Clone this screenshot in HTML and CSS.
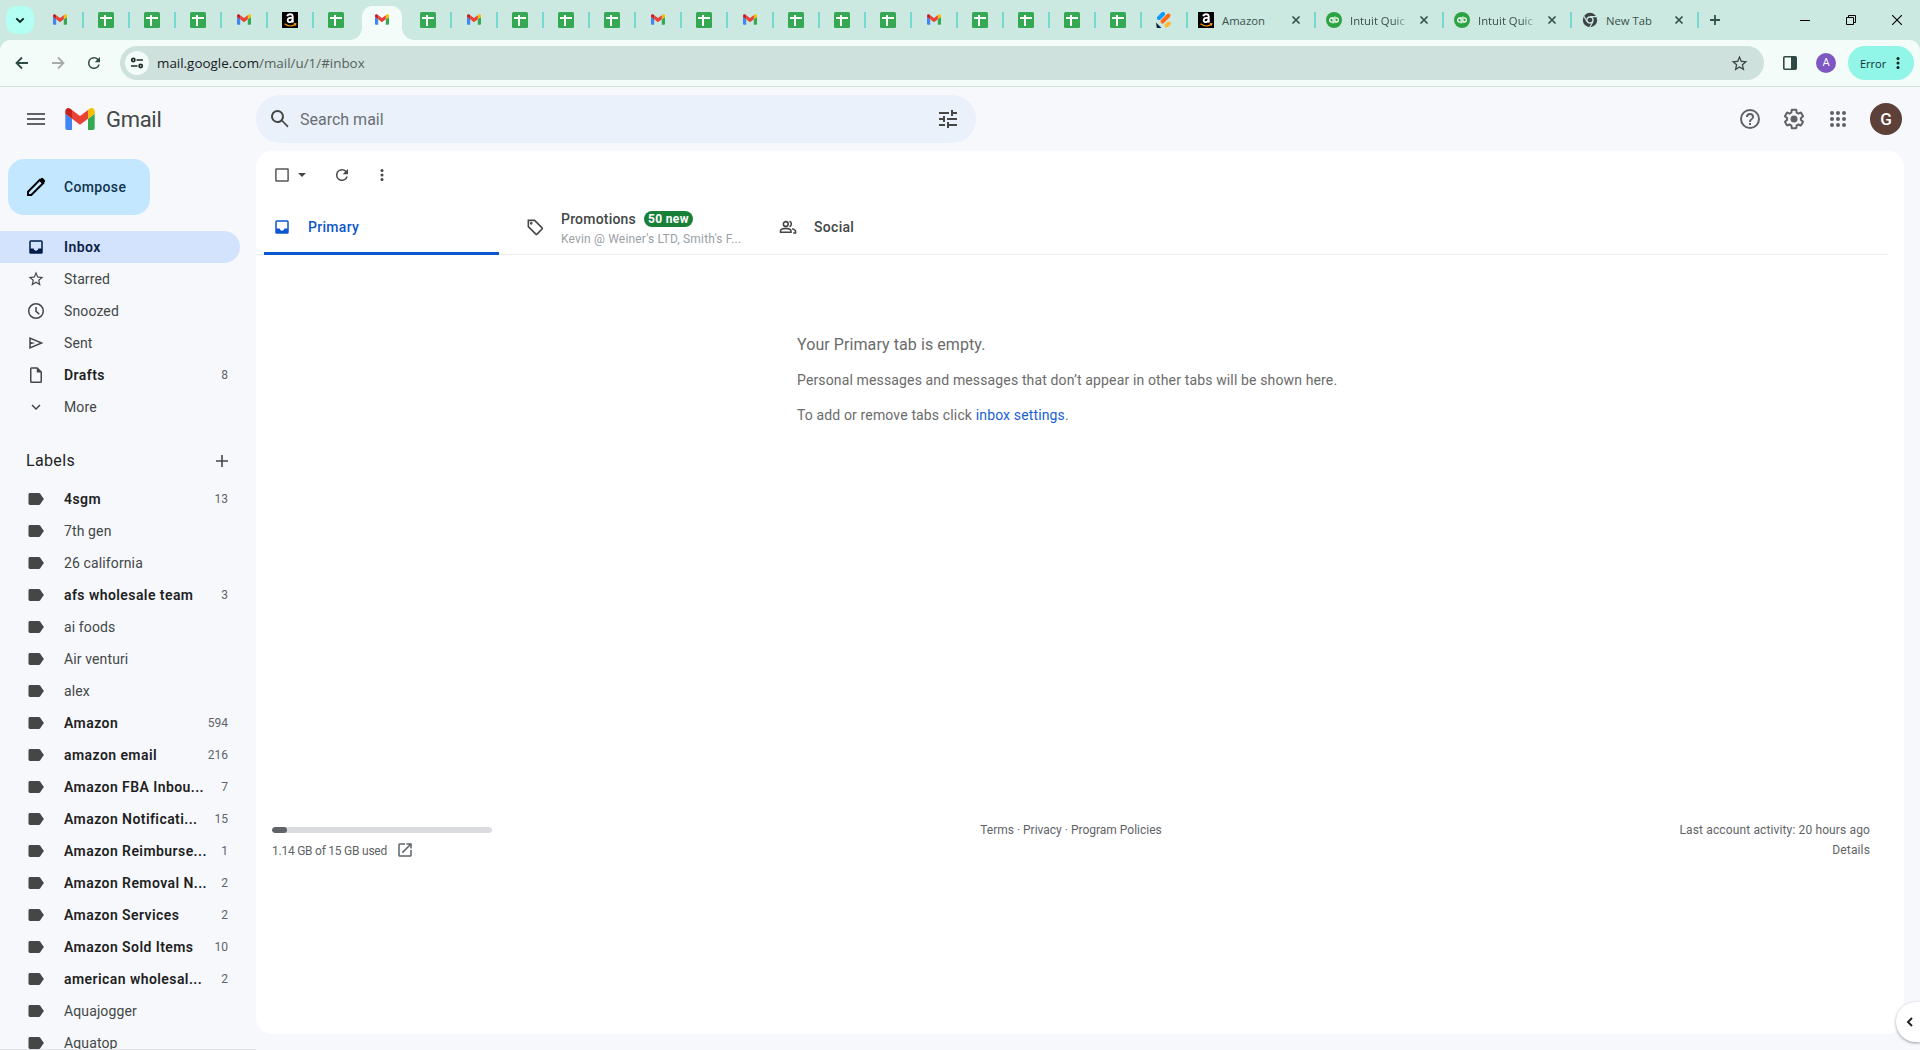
FILE: index.html
```html
<!DOCTYPE html>
<html lang="en">
<head>
<meta charset="utf-8">
<title>Gmail</title>
<link rel="stylesheet" href="styles.css">
</head>
<body>
<svg class="defs" width="0" height="0" aria-hidden="true">
  <symbol id="gmail" viewBox="52 42 88 66">
    <path fill="#4285f4" d="M58 108h14V74L52 59v43c0 3.32 2.69 6 6 6"/>
    <path fill="#34a853" d="M120 108h14c3.32 0 6-2.69 6-6V59l-20 15"/>
    <path fill="#fbbc04" d="M120 48v26l20-15v-8c0-7.42-8.47-11.65-14.4-7.2"/>
    <path fill="#ea4335" d="M72 74V48l24 18 24-18v26L96 92"/>
    <path fill="#c5221f" d="M52 51v8l20 15V48l-5.6-4.2c-5.94-4.45-14.4-.22-14.4 7.2"/>
  </symbol>
  <symbol id="sheet" viewBox="0 0 16 16"><rect width="16" height="16" rx="1.5" fill="#34a853"/><path d="M2 6h12M7 3v11" stroke="#fff" stroke-width="2"/></symbol>
  <symbol id="amazon" viewBox="0 0 16 16"><rect width="16" height="16" fill="#000"/><path d="M5.2 4.3C5.6 2.900 6.800 2.200 8.200 2.200c1.700 0 2.500.8 2.500 2.400v4.200c0 .7.2 1 .6 1.500M10.500 5.600C7.600 5.500 5.700 6.200 5.700 8.200c0 2.700 4.200 2.500 4.800-.6" fill="none" stroke="#fff" stroke-width="1.900"/><path d="M2.500 11.800c3.300 2.600 7.600 2.700 11 .4M11.800 11.600l2.100.1-.6 1.900" fill="none" stroke="#f90" stroke-width="1.100"/></symbol>
  <symbol id="jungle" viewBox="0 0 16 16"><g stroke-width="4" stroke-linecap="round"><path d="M3 6l4-4" stroke="#0d99ff"/><path d="M6.500 9.500l6-6" stroke="#ff6a13"/><path d="M10.500 13.500l2.500-2" stroke="#ffb92e"/></g><path d="M0 10.500L5.500 16H.8z" fill="#0a2150"/></symbol>
  <symbol id="qb" viewBox="0 0 16 16"><circle cx="8" cy="8" r="8" fill="#2ba342"/><path d="M7.100 11.600V6H5.700a2 2 0 0 0 0 4.100h.4M8.900 4.400V10h1.400a2 2 0 0 0 0-4.100h-.4" fill="none" stroke="#fff" stroke-width="1.300"/></symbol>
  <symbol id="chrome" viewBox="0 0 16 16"><circle cx="8" cy="8" r="7.200" fill="#3c4446"/><circle cx="8" cy="8" r="3" fill="#3c4446" stroke="#cbe8e1" stroke-width="1.300"/><path d="M8 4.700h6.600M5.100 9.700L1.900 4.200M10.900 9.700l-3.200 5.500" stroke="#cbe8e1" stroke-width="1.200"/></symbol>
  <symbol id="x" viewBox="0 0 16 16"><path d="M4.500 4.500l7 7m0-7l-7 7" stroke="#35504a" stroke-width="1.700"/></symbol>
  <symbol id="inbox" viewBox="0 0 24 24"><path d="M19 3H5a2 2 0 0 0-2 2v14a2 2 0 0 0 2 2h14a2 2 0 0 0 2-2V5a2 2 0 0 0-2-2zm0 11h-4c0 1.660-1.350 3-3 3s-3-1.340-3-3H5V5h14v9z"/></symbol>
  <symbol id="star" viewBox="0 0 24 24"><path d="M22 9.240l-7.190-.62L12 2 9.190 8.630 2 9.240l5.460 4.730L5.820 21 12 17.270 18.180 21l-1.630-7.030L22 9.240zM12 15.400l-3.760 2.270 1-4.280-3.320-2.880 4.380-.38L12 6.100l1.710 4.040 4.380.38-3.320 2.880 1 4.280L12 15.400z"/></symbol>
  <symbol id="clock" viewBox="0 0 24 24"><path d="M12 1.300a10.700 10.700 0 1 0 0 21.400 10.700 10.700 0 0 0 0-21.400zm0 19.400a8.700 8.700 0 1 1 0-17.400 8.700 8.700 0 0 1 0 17.400zM13 6.500h-2V13l4.800 4 1.200-1.600-4-3.300z"/></symbol>
  <symbol id="send" viewBox="0 0 24 24"><path d="M3 4v16l19-8L3 4zm2 3l11.850 5L5 17v-3.500l6-1.500-6-1.500V7z"/></symbol>
  <symbol id="draft" viewBox="0 0 24 24"><path d="M14 1.500H6a2 2 0 0 0-2 2v17c0 1.100.89 2 1.990 2H18a2 2 0 0 0 2-2V7.500l-6-6zM6 20.500v-17h7v5h5v12H6z"/></symbol>
  <symbol id="down" viewBox="0 0 24 24"><path d="M7.410 8.590L12 13.170l4.590-4.580L18 10l-6 6-6-6z"/></symbol>
  <symbol id="label" viewBox="0 0 24 24"><path d="M17.630 4.840C17.270 4.330 16.670 4 16 4L4 4.010C2.900 4.010 2 4.900 2 6v12c0 1.100.9 1.990 2 1.990L16 20c.67 0 1.270-.33 1.630-.84L22.500 12l-4.870-7.160z"/></symbol>
  <symbol id="refresh" viewBox="0 0 24 24"><path d="M17.650 6.350A7.960 7.960 0 0 0 12 4a8 8 0 1 0 7.730 10h-2.080A6 6 0 1 1 12 6c1.660 0 3.140.69 4.220 1.780L13 11h7V4l-2.350 2.350z"/></symbol>
  <symbol id="dots" viewBox="0 0 24 24"><circle cx="12" cy="6" r="2"/><circle cx="12" cy="12" r="2"/><circle cx="12" cy="18" r="2"/></symbol>
</svg>

<div class="tabstrip">
  <div class="tab-search"><svg width="12" height="12" viewBox="0 0 12 12"><path d="M2.300 4.300L6 8l3.700-3.700" fill="none" stroke="#0b1f1c" stroke-width="1.900"/></svg></div>
  <div class="tab"><svg class="gm"><use href="#gmail"/></svg></div>
  <div class="tab"><svg><use href="#sheet"/></svg></div>
  <div class="tab"><svg><use href="#sheet"/></svg></div>
  <div class="tab"><svg><use href="#sheet"/></svg></div>
  <div class="tab"><svg class="gm"><use href="#gmail"/></svg></div>
  <div class="tab"><svg><use href="#amazon"/></svg></div>
  <div class="tab bare"><svg><use href="#sheet"/></svg></div>
  <div class="tab bare active"><svg class="gm"><use href="#gmail"/></svg></div>
  <div class="tab"><svg><use href="#sheet"/></svg></div>
  <div class="tab"><svg class="gm"><use href="#gmail"/></svg></div>
  <div class="tab"><svg><use href="#sheet"/></svg></div>
  <div class="tab"><svg><use href="#sheet"/></svg></div>
  <div class="tab"><svg><use href="#sheet"/></svg></div>
  <div class="tab"><svg class="gm"><use href="#gmail"/></svg></div>
  <div class="tab"><svg><use href="#sheet"/></svg></div>
  <div class="tab"><svg class="gm"><use href="#gmail"/></svg></div>
  <div class="tab"><svg><use href="#sheet"/></svg></div>
  <div class="tab"><svg><use href="#sheet"/></svg></div>
  <div class="tab"><svg><use href="#sheet"/></svg></div>
  <div class="tab"><svg class="gm"><use href="#gmail"/></svg></div>
  <div class="tab"><svg><use href="#sheet"/></svg></div>
  <div class="tab"><svg><use href="#sheet"/></svg></div>
  <div class="tab"><svg><use href="#sheet"/></svg></div>
  <div class="tab"><svg><use href="#sheet"/></svg></div>
  <div class="tab"><svg><use href="#jungle"/></svg></div>
  <div class="tab wide"><svg><use href="#amazon"/></svg><span class="tab-title">Amazon</span><svg><use href="#x"/></svg></div>
  <div class="tab wide"><svg><use href="#qb"/></svg><span class="tab-title fade">Intuit Quic</span><svg><use href="#x"/></svg></div>
  <div class="tab wide"><svg><use href="#qb"/></svg><span class="tab-title fade">Intuit Quic</span><svg><use href="#x"/></svg></div>
  <div class="tab wide last"><svg><use href="#chrome"/></svg><span class="tab-title">New Tab</span><svg><use href="#x"/></svg></div>
  <svg class="plus" width="12" height="12" viewBox="0 0 12 12"><path d="M6 1v10M1 6h10" stroke="#35504a" stroke-width="1.800"/></svg>
  <div class="window-buttons">
    <svg width="10" height="10"><path d="M0 5.500h10" stroke="#000"/></svg>
    <svg width="10" height="10" fill="none" stroke="#000"><path d="M.5 2.500h7v7h-7zM2.500 2.500v-2h7v7h-2"/></svg>
    <svg width="10" height="10"><path d="M0 0l10 10M10 0L0 10" stroke="#000" stroke-width="1.100"/></svg>
  </div>
</div>

<div class="toolbar">
  <div class="nav">
    <svg width="16" height="16" viewBox="0 0 16 16" fill="none" stroke="#2f4a45" stroke-width="1.800"><path d="M14 8H3M8 2.500L2.500 8 8 13.500"/></svg>
    <svg width="16" height="16" viewBox="0 0 16 16" fill="none" stroke="#a3aeab" stroke-width="1.800"><path d="M2 8h11M8 2.500L13.500 8 8 13.500"/></svg>
    <svg width="18" height="18" viewBox="0 0 24 24" fill="#2f4a45"><use href="#refresh"/></svg>
  </div>
  <div class="omnibox">
    <span class="site-info"><svg width="14" height="14" viewBox="0 0 14 14" fill="none" stroke="#1d2b28" stroke-width="1.700"><circle cx="3.300" cy="4" r="1.600"/><path d="M6.500 4H13M1 10h6.500"/><circle cx="10.700" cy="10" r="1.600"/></svg></span>
    <span class="url">mail.google.com<span class="path">/mail/u/1/#inbox</span></span>
    <svg class="bookmark" width="19" height="19" fill="#3a4745"><use href="#star"/></svg>
  </div>
  <svg class="panel" width="14" height="14" viewBox="0 0 14 14"><rect x=".8" y=".8" width="12.400" height="12.400" rx="1" fill="none" stroke="#2f4a45" stroke-width="1.600"/><path d="M8 1h5v12H8z" fill="#2f4a45"/></svg>
  <span class="profile">A</span>
  <span class="error"><span class="error-text">Error</span><svg width="18" height="18" fill="#06201c"><use href="#dots"/></svg></span>
</div>

<div class="app">
  <header class="header">
    <svg class="burger" width="18" height="12"><path d="M0 1h18M0 6h18M0 11h18" stroke="#5f6368" stroke-width="2"/></svg>
    <svg class="logo" width="30" height="22"><use href="#gmail"/></svg>
    <span class="brand">Gmail</span>
    <div class="search">
      <svg width="24" height="24" viewBox="0 0 24 24" fill="#444746"><path d="M20.490 19l-5.730-5.730A6.500 6.500 0 1 0 9.500 16c1.610 0 3.090-.59 4.230-1.570L19.500 20.490zM9.500 14a4.500 4.500 0 1 1 0-9 4.500 4.500 0 0 1 0 9z"/></svg>
      <span class="placeholder">Search mail</span>
      <svg width="24" height="24" viewBox="0 0 24 24" fill="#444746"><path d="M3 17v2h6v-2H3zM3 5v2h10V5H3zm10 16v-2h8v-2h-8v-2h-2v6h2zM7 9v2H3v2h4v2h2V9H7zm14 4v-2H11v2h10zm-6-4h2V7h4V5h-4V3h-2v6z"/></svg>
    </div>
    <div class="header-icons">
      <svg width="24" height="24" viewBox="0 0 24 24" fill="#5f6368"><path d="M11 18h2v-2h-2v2zm1-16a10 10 0 1 0 0 20 10 10 0 0 0 0-20zm0 18a8 8 0 1 1 0-16 8 8 0 0 1 0 16zm0-14a4 4 0 0 0-4 4h2a2 2 0 1 1 4 0c0 2-3 1.750-3 5h2c0-2.250 3-2.500 3-5a4 4 0 0 0-4-4z"/></svg>
      <svg width="24" height="24" viewBox="0 0 24 24" fill="#5f6368"><path d="M13.850 22.250h-3.700c-.74 0-1.360-.54-1.450-1.270l-.27-1.890c-.27-.14-.53-.29-.79-.46l-1.800.72c-.7.26-1.470-.03-1.810-.65L2.200 15.530c-.35-.66-.2-1.440.36-1.880l1.530-1.190c-.01-.15-.02-.3-.02-.46 0-.15.010-.31.020-.46l-1.520-1.190c-.59-.45-.74-1.260-.37-1.880l1.850-3.190c.34-.62 1.110-.9 1.790-.63l1.810.73c.26-.17.52-.32.78-.46l.27-1.910c.09-.7.710-1.250 1.440-1.250h3.700c.74 0 1.360.54 1.450 1.270l.27 1.890c.27.14.53.29.79.46l1.800-.72c.71-.26 1.480.03 1.820.65l1.840 3.180c.36.660.2 1.440-.36 1.880l-1.520 1.190c.01.15.02.3.02.46s-.01.31-.02.46l1.520 1.190c.56.450.72 1.230.37 1.860l-1.860 3.220c-.34.62-1.110.9-1.800.63l-1.800-.72c-.26.17-.52.32-.78.46l-.27 1.910c-.1.680-.72 1.220-1.460 1.220zm-3.230-2h2.760l.37-2.550.53-.22c.44-.18.88-.44 1.340-.78l.45-.34 2.380.96 1.380-2.400-2.030-1.580.070-.56c.03-.26.060-.51.060-.78s-.03-.53-.06-.78l-.07-.56 2.030-1.580-1.390-2.400-2.390.96-.45-.35c-.42-.32-.87-.58-1.330-.77l-.52-.22-.37-2.550h-2.760l-.37 2.550-.53.210c-.44.190-.88.440-1.340.79l-.45.330-2.380-.95-1.390 2.390 2.030 1.580-.07.560a7 7 0 0 0-.06.79c0 .26.020.53.060.78l.07.560-2.030 1.580 1.380 2.400 2.390-.96.450.35c.43.330.86.580 1.330.77l.53.220z"/><circle cx="12" cy="12" r="3.500"/></svg>
      <svg width="24" height="24" viewBox="0 0 24 24" fill="#5f6368"><circle cx="6" cy="6" r="2"/><circle cx="12" cy="6" r="2"/><circle cx="18" cy="6" r="2"/><circle cx="6" cy="12" r="2"/><circle cx="12" cy="12" r="2"/><circle cx="18" cy="12" r="2"/><circle cx="6" cy="18" r="2"/><circle cx="12" cy="18" r="2"/><circle cx="18" cy="18" r="2"/></svg>
      <span class="avatar">G</span>
    </div>
  </header>

  <div class="columns">
    <nav class="sidebar">
      <div class="compose"><svg width="24" height="24" viewBox="0 0 24 24" fill="none" stroke="#000" stroke-width="2"><path d="M4 20v-3.300L15.800 4.900l3.300 3.300L7.300 20z"/><path d="M15.300 5.300l2-2a1.200 1.200 0 0 1 1.700 0l1.700 1.700a1.200 1.200 0 0 1 0 1.700l-2 2z" fill="#000" stroke="none"/><path d="M14.800 5.200l4 4 2.200-2.600-3.500-3.600z" fill="#000" stroke="none"/></svg><span>Compose</span></div>
      <div class="row bold selected"><svg><use href="#inbox"/></svg><span class="name">Inbox</span></div>
      <div class="row"><svg><use href="#star"/></svg><span class="name">Starred</span></div>
      <div class="row"><svg><use href="#clock"/></svg><span class="name">Snoozed</span></div>
      <div class="row"><svg><use href="#send"/></svg><span class="name">Sent</span></div>
      <div class="row bold"><svg><use href="#draft"/></svg><span class="name">Drafts</span><span class="count">8</span></div>
      <div class="row"><svg><use href="#down"/></svg><span class="name">More</span></div>
      <div class="labels-head"><span>Labels</span><svg width="12" height="12"><path d="M6 0v12M0 6h12" stroke="#444746" stroke-width="1.600"/></svg></div>
      <div class="row bold"><svg><use href="#label"/></svg><span class="name">4sgm</span><span class="count">13</span></div>
      <div class="row"><svg><use href="#label"/></svg><span class="name">7th gen</span></div>
      <div class="row"><svg><use href="#label"/></svg><span class="name">26 california</span></div>
      <div class="row bold"><svg><use href="#label"/></svg><span class="name">afs wholesale team</span><span class="count">3</span></div>
      <div class="row"><svg><use href="#label"/></svg><span class="name">ai foods</span></div>
      <div class="row"><svg><use href="#label"/></svg><span class="name">Air venturi</span></div>
      <div class="row"><svg><use href="#label"/></svg><span class="name">alex</span></div>
      <div class="row bold"><svg><use href="#label"/></svg><span class="name">Amazon</span><span class="count">594</span></div>
      <div class="row bold"><svg><use href="#label"/></svg><span class="name">amazon email</span><span class="count">216</span></div>
      <div class="row bold"><svg><use href="#label"/></svg><span class="name">Amazon FBA Inbou...</span><span class="count">7</span></div>
      <div class="row bold"><svg><use href="#label"/></svg><span class="name">Amazon Notificati...</span><span class="count">15</span></div>
      <div class="row bold"><svg><use href="#label"/></svg><span class="name">Amazon Reimburse...</span><span class="count">1</span></div>
      <div class="row bold"><svg><use href="#label"/></svg><span class="name">Amazon Removal N...</span><span class="count">2</span></div>
      <div class="row bold"><svg><use href="#label"/></svg><span class="name">Amazon Services</span><span class="count">2</span></div>
      <div class="row bold"><svg><use href="#label"/></svg><span class="name">Amazon Sold Items</span><span class="count">10</span></div>
      <div class="row bold"><svg><use href="#label"/></svg><span class="name">american wholesal...</span><span class="count">2</span></div>
      <div class="row"><svg><use href="#label"/></svg><span class="name">Aquajogger</span></div>
      <div class="row"><svg><use href="#label"/></svg><span class="name">Aquatop</span></div>
    </nav>

    <main class="card">
      <div class="actions">
        <svg width="14" height="14"><rect x=".9" y=".9" width="12.200" height="12.200" rx=".5" fill="none" stroke="#55585a" stroke-width="1.500"/></svg>
        <svg class="caret" width="8" height="4"><path d="M0 0h8L4 4z" fill="#444746"/></svg>
        <svg class="reload" width="18" height="18" fill="#444746"><use href="#refresh"/></svg>
        <svg class="more" width="18" height="18" fill="#444746"><use href="#dots"/></svg>
      </div>
      <div class="tabs">
        <div class="mail-tab on"><svg width="18" height="18"><use href="#inbox"/></svg><span class="tab-name">Primary</span></div>
        <div class="mail-tab tagged"><svg width="20" height="20" viewBox="0 0 24 24" fill="none" stroke="#444746" stroke-width="1.900"><path d="M4 4h7.500l9 9a1 1 0 0 1 0 1.400l-6.100 6.100a1 1 0 0 1-1.400 0l-9-9z"/><circle cx="7.500" cy="7.500" r=".7"/></svg>
          <div class="promo"><div class="promo-top"><span class="tab-name">Promotions</span><span class="badge">50 new</span></div><span class="senders">Kevin @ Weiner's LTD, Smith's F...</span></div></div>
        <div class="mail-tab"><svg width="18" height="18" viewBox="0 0 24 24" fill="none" stroke="#444746" stroke-width="2.100"><circle cx="9" cy="8" r="3.200"/><path d="M2 19v-2c0-2 4-3.200 7-3.200s7 1.200 7 3.200v2zM14 4.300a4 4 0 0 1 0 7.400M17.500 14.300c2.300.7 4.500 1.700 4.500 3.200V20h-3"/></svg><span class="tab-name">Social</span></div>
      </div>
      <div class="empty">
        <p class="empty-title">Your Primary tab is empty.</p>
        <p>Personal messages and messages that don’t appear in other tabs will be shown here.</p>
        <p>To add or remove tabs click <a>inbox settings</a>.</p>
      </div>
      <footer class="foot">
        <div class="storage">
          <div class="meter"><i></i></div>
          <div class="used"><span>1.14 GB of 15 GB used</span><svg width="18" height="18" viewBox="0 0 24 24" fill="#5f6368"><path d="M19 19H5V5h7V3H5a2 2 0 0 0-2 2v14a2 2 0 0 0 2 2h14c1.100 0 2-.9 2-2v-7h-2v7zM14 3v2h3.590l-9.830 9.830 1.410 1.410L19 6.410V10h2V3h-7z"/></svg></div>
        </div>
        <div class="terms">Terms · Privacy · Program Policies</div>
        <div class="activity"><span>Last account activity: 20 hours ago</span><span>Details</span></div>
      </footer>
    </main>
  </div>
  <div class="status-edge"></div>
  <div class="side-toggle"><svg width="8" height="10" viewBox="0 0 8 10"><path d="M6 1L2 5l4 4" fill="none" stroke="#1f1f1f" stroke-width="1.900"/></svg></div>
</div>
</body>
</html>
```
FILE: styles.css
```css
* { box-sizing: border-box; }

body {
  margin: 0;
  width: 1920px;
  height: 1050px;
  overflow: hidden;
  display: flex;
  flex-direction: column;
  background: #cbe8e1;
  font-family: Roboto, "Noto Sans", sans-serif;
  color: #1f1f1f;
}

svg { display: block; flex: none; }
.defs { position: absolute; }

/* Browser tab strip */
.tabstrip {
  height: 40px;
  display: flex;
  align-items: center;
  padding-left: 6px;
  font-family: "Open Sans", "Noto Sans", sans-serif;
}
.tab-search {
  width: 28px;
  height: 28px;
  margin-right: 4px;
  border-radius: 10px;
  background: #b3fff4;
  display: grid;
  place-items: center;
}
.tab {
  flex: none;
  width: 46px;
  height: 16px;
  padding-left: 14px;
  border-right: 2px solid #74dace;
  display: flex;
  align-items: center;
}
.tab svg { width: 16px; height: 16px; }
.tab svg.gm { padding: 1px 1px 2px; }
.tab.bare { border-right-color: transparent; }
.tab.active {
  position: relative;
  height: 34px;
  margin: 6px 4px 0 2px;
  width: 40px;
  padding-left: 12px;
  border: 0;
  border-radius: 10px 10px 0 0;
  background: #f4fcf9;
}
.tab.active::before,
.tab.active::after {
  content: "";
  position: absolute;
  bottom: 0;
  width: 12px;
  height: 12px;
}
.tab.active::before { left: -12px; background: radial-gradient(circle at 0 0, transparent 11.500px, #f4fcf9 12px); }
.tab.active::after { right: -12px; background: radial-gradient(circle at 100% 0, transparent 11.500px, #f4fcf9 12px); }
.tab.active svg { margin-top: -6px; }
.tab.wide { width: 128px; padding-left: 10px; }
.tab.wide.last { width: 127px; }
.tab.wide.last .tab-title { width: 57px; }
.tab-title {
  width: 58px;
  margin: 1px 8px 0;
  font-size: 11.300px;
  line-height: 16px;
  color: #3c4f4b;
  white-space: nowrap;
}
.tab-title.fade { -webkit-mask-image: linear-gradient(90deg, #000 75%, transparent 105%); mask-image: linear-gradient(90deg, #000 75%, transparent 105%); }
.plus { margin-left: 10px; }
.window-buttons { display: flex; gap: 36px; margin-left: auto; margin-right: 18px; }

/* Address bar */
.toolbar {
  height: 47px;
  flex: none;
  display: flex;
  align-items: center;
  border-bottom: 1px solid #d2e3df;
  border-radius: 10px 10px 0 0;
  background: #f4fcf9;
  font-family: "Open Sans", "Noto Sans", sans-serif;
}
.nav { width: 120px; display: flex; align-items: center; gap: 20px; padding-left: 14px; }
.nav svg:last-child { margin-left: -1px; }
.omnibox {
  width: 1644px;
  height: 34px;
  border-radius: 17px;
  background: #cee1dc;
  display: flex;
  align-items: center;
  padding: 0 15px 0 5px;
}
.site-info {
  width: 24px;
  height: 24px;
  border-radius: 50%;
  background: #f4fcf9;
  display: grid;
  place-items: center;
}
.url { margin-left: 8px; font-size: 13.400px; color: #16201e; }
.url .path { color: #55625f; }
.bookmark { margin-left: auto; }
.panel { margin-left: 19px; }
.profile {
  width: 20px;
  height: 20px;
  margin-left: 19px;
  border-radius: 50%;
  background: #7e57c2;
  color: #fff;
  font: 11px/20px Roboto, sans-serif;
  text-align: center;
}
.error {
  width: 66px;
  height: 34px;
  margin-left: 12px;
  padding-left: 12px;
  border-radius: 17px;
  background: #91f5e7;
  display: flex;
  align-items: center;
  font-size: 11px;
  color: #14312c;
}
.error-text { width: 29px; }

/* Gmail */
.app { flex: 1; min-height: 0; display: flex; flex-direction: column; background: #f6f8fc; }
.header { height: 64px; flex: none; display: flex; align-items: center; }
.burger { margin-left: 27px; }
.logo { margin-left: 20px; }
.brand { width: 150px; margin-left: 11px; font-size: 22px; letter-spacing: -.3px; color: #444746; }
.search {
  width: 720px;
  height: 48px;
  padding: 0 16px 0 12px;
  border-radius: 24px;
  background: #eaf1fb;
  display: flex;
  align-items: center;
}
.placeholder { flex: 1; margin-left: 8px; font-size: 16px; color: #6b6f73; }
.header-icons { margin-left: auto; margin-right: 18px; display: flex; align-items: center; gap: 20px; }
.avatar {
  width: 32px;
  height: 32px;
  border-radius: 50%;
  background: #5d4037;
  color: #fff;
  font-size: 17px;
  font-weight: 500;
  line-height: 32px;
  text-align: center;
}

.columns { flex: 1; min-height: 0; display: flex; }
.sidebar { width: 256px; overflow: hidden; padding-top: 8px; }
.compose {
  width: 142px;
  height: 56px;
  margin: 0 0 16px 8px;
  padding-left: 16px;
  border-radius: 16px;
  background: #c2e7ff;
  display: flex;
  align-items: center;
  gap: 16px;
  font-size: 14px;
  font-weight: 500;
  letter-spacing: .35px;
  color: #12344f;
}
.row {
  width: 240px;
  height: 32px;
  padding: 0 12px 0 27px;
  border-radius: 0 16px 16px 0;
  display: flex;
  align-items: center;
  font-size: 14px;
  letter-spacing: .12px;
  color: #444746;
  fill: #444746;
}
.row svg { width: 18px; height: 18px; }
.name { flex: 1; margin-left: 19px; white-space: nowrap; }
.count { font-size: 12px; font-weight: 400; letter-spacing: 0; color: #5f6368; }
.row.bold { color: #1f1f1f; }
.row.bold .name { font-weight: 600; letter-spacing: .43px; }
.row.selected { background: #d3e3fd; color: #0b2347; fill: #001d49; }
.labels-head {
  height: 60px;
  padding: 15px 28px 0 26px;
  display: flex;
  align-items: center;
  justify-content: space-between;
  width: 256px;
  font-size: 16px;
  letter-spacing: .35px;
}

.card {
  width: 1648px;
  height: 883px;
  border-radius: 16px;
  background: #fff;
}
.actions { height: 48px; padding-left: 19px; display: flex; align-items: center; }
.caret { margin-left: 9px; }
.reload { margin-left: 27px; }
.more { margin-left: 22px; }
.tabs { width: 1632px; height: 56px; padding-left: 8px; border-bottom: 1px solid #e9ebee; display: flex; }
.mail-tab {
  width: 253px;
  height: 56px;
  padding-left: 9px;
  display: flex;
  align-items: center;
  color: #444746;
}
.mail-tab.tagged { padding-left: 8px; }
.mail-tab.on {
  width: 235px;
  margin-right: 18px;
  color: #0b57d0;
  fill: #0b57d0;
  box-shadow: inset 0 -3px #0b57d0;
  border-radius: 2px 2px 0 0;
}
.mail-tab svg { margin-right: 17px; }
.tab-name { font-size: 14px; font-weight: 500; letter-spacing: .3px; }
.promo { display: flex; flex-direction: column; margin-left: -1px; padding-top: 4px; }
.promo-top { display: flex; align-items: center; gap: 8px; height: 16px; }
.promo .tab-name { letter-spacing: .2px; }
.badge { height: 16px; padding: 0 4px; border-radius: 8px; background: #188038; color: #fff; font-size: 12px; font-weight: 700; letter-spacing: .35px; line-height: 16px; }
.senders { margin-top: 4px; font-size: 12px; letter-spacing: .18px; line-height: 16px; color: #9aa0a6; white-space: nowrap; }

.empty { padding: 80px 0 0 541px; height: 566px; font-size: 14px; letter-spacing: .14px; color: #6b6b6b; }
.empty p { margin: 0 0 15px; line-height: 20px; }
.empty a { color: #1a5fd6; }
.empty .empty-title { font-size: 16px; letter-spacing: .08px; }

.foot { display: flex; justify-content: space-between; padding: 0 34px 0 16px; margin-top: -1px; font-size: 12px; line-height: 20px; color: #5f6368; }
.storage { width: 220px; padding-top: 7px; }
.meter { height: 6px; border-radius: 3px; background: #dadce0; overflow: hidden; }
.meter i { display: block; width: 15px; height: 6px; border-radius: 3px; background: #5f6368; }
.used { display: flex; align-items: center; gap: 9px; margin-top: 8px; letter-spacing: -.24px; }
.used svg { margin-top: -3px; }
.activity { width: 220px; display: flex; flex-direction: column; align-items: flex-end; letter-spacing: .13px; }

/* Overlays at the window's bottom edge */
.status-edge { position: absolute; left: 0; top: 1049px; width: 256px; height: 1px; background: #dfe1e4; }
.side-toggle {
  position: absolute;
  left: 1896px;
  top: 1002px;
  width: 24px;
  height: 40px;
  padding-left: 10px;
  border-radius: 20px 0 0 20px;
  background: #fff;
  box-shadow: 0 1px 3px rgba(60, 64, 67, .5);
  display: flex;
  align-items: center;
}
```
